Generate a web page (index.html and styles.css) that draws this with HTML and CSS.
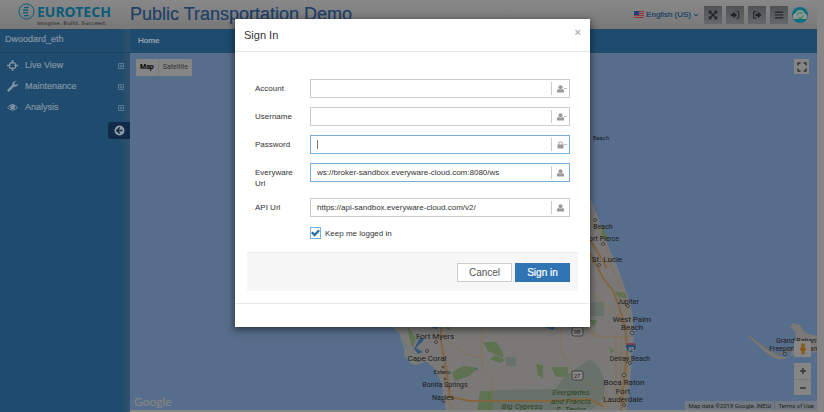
FILE: index.html
```html
<!DOCTYPE html>
<html lang="en">
<head>
<meta charset="utf-8">
<title>Public Transportation Demo</title>
<link rel="stylesheet" href="styles.css">
</head>
<body>
<svg class="defs" aria-hidden="true">
  <symbol id="user" viewBox="0 0 14 16"><circle cx="7" cy="4.500" r="4"/><path d="M0 15V11Q0 8 3 8Q7 10 11 8Q14 8 14 11V15Z"/></symbol>
  <symbol id="lock" viewBox="0 0 14 16"><path d="M1 7H13V15H1Z"/><path d="M3.500 8V5A3.500 3.500 0 0 1 10.500 5V8" fill="none" stroke="currentColor" stroke-width="2"/></symbol>
  <symbol id="plusbox" viewBox="0 0 12 12"><path d="M1 1H11V11H1ZM6 3V9M3 6H9" fill="none" stroke="currentColor" stroke-width="1.300"/></symbol>
</svg>

<div class="page">
  <header class="topbar">
    <a class="brand" href="#" aria-label="Eurotech">
      <svg class="brand-mark" viewBox="0 0 17 17"><circle cx="8.500" cy="8.500" r="7.600" fill="none" stroke="currentColor"/><path d="M6 4.500H11M5 7.200H10M5 9.900H10M6 12.600H11" stroke="currentColor" stroke-width="1.400"/></svg>
      <span class="brand-text"><b>EUROTECH</b><small>Imagine. Build. Succeed.</small></span>
    </a>
    <h1>Public Transportation Demo</h1>
    <div class="tools">
      <button class="language"><svg class="flag" viewBox="0 0 10 7"><path fill="#8c7777" d="M0 0H10V7H0Z"/><path stroke="#93373d" d="M0 .5H10M0 2.500H10M0 4.500H10M0 6.500H10"/><path fill="#1c3f86" d="M0 0H5V4H0Z"/></svg>English (US)<svg class="chevron" viewBox="0 0 6 6"><path d="M1 2L3 4L5 2" fill="none" stroke="currentColor"/></svg></button>
      <button class="tool" aria-label="Expand"><svg viewBox="0 0 12 12"><path d="M1 1H5L1 5ZM11 1V5L7 1ZM1 11V7L5 11ZM11 11H7L11 7Z"/><path d="M2 2L10 10M10 2L2 10" stroke="currentColor" stroke-width="1.800"/></svg></button>
      <button class="tool" aria-label="Log in"><svg viewBox="0 0 12 12"><path d="M1 4.500H4V2L8.500 6L4 10V7.500H1Z"/><path d="M8 2H10.500V10H8" fill="none" stroke="currentColor" stroke-width="1.200"/></svg></button>
      <button class="tool" aria-label="Log out"><svg viewBox="0 0 12 12"><path d="M4 4.500H7V2L11.500 6L7 10V7.500H4Z"/><path d="M5 2H2V10H5" fill="none" stroke="currentColor" stroke-width="1.200"/></svg></button>
      <button class="tool" aria-label="Menu"><svg viewBox="0 0 12 12"><path d="M1 2.500H11M1 6H11M1 9.500H11" stroke="currentColor" stroke-width="1.400"/></svg></button>
      <svg class="cloud" viewBox="0 0 16 16"><circle cx="8" cy="8" r="8" fill="#096f80"/><path d="M1.500 12Q-.5 7.500 3.500 6Q5 2.500 8.500 3Q12 3.300 12.500 6.200Q16.500 7.500 14.500 12Z" fill="#8e9696"/><path d="M5.300 8.300A2.900 2.900 0 0 1 10.300 6.500M11 8.300A2.900 2.900 0 0 1 6 10.400" fill="none" stroke="#38864c" stroke-width="1.200"/></svg>
    </div>
  </header>

  <div class="body">
    <nav class="sidebar">
      <div class="account">Dwoodard_eth</div>
      <ul>
        <li><a href="#"><svg class="nav-icon" viewBox="0 0 12 12"><circle cx="6" cy="6" r="3.500" fill="none" stroke="currentColor" stroke-width="1.400"/><path d="M6 0V4M6 8V12M0 6H4M8 6H12" stroke="currentColor" stroke-width="1.700"/></svg><span>Live View</span><svg class="plus"><use href="#plusbox"/></svg></a></li>
        <li><a href="#"><svg class="nav-icon" viewBox="0 0 12 12"><path d="M11.800 3L9.500 4.300L8 3.300V2L10.200.6Q7.500-.3 6.200 1.800Q5.500 3 6 4.200L.8 9.400Q0 10.400.8 11.200Q1.700 12 2.700 11.200L7.800 6.100Q10 6.800 11.300 5.200Q12 4.200 11.800 3Z"/></svg><span>Maintenance</span><svg class="plus"><use href="#plusbox"/></svg></a></li>
        <li><a href="#"><svg class="nav-icon" viewBox="0 0 12 12"><path d="M.5 6Q6-.5 11.500 6Q6 12 .5 6Z" fill="none" stroke="currentColor"/><circle cx="6" cy="5.500" r="2.700"/><path d="M4.700 5Q5 3.800 6 3.800" fill="none" stroke="#1f4b6e" stroke-width=".7"/></svg><span>Analysis</span><svg class="plus"><use href="#plusbox"/></svg></a></li>
      </ul>
      <button class="collapse" aria-label="Collapse menu"><svg viewBox="0 0 12 12"><circle cx="6" cy="6" r="5.500"/><path d="M6.300 2.800L3 6L6.300 9.200M3.200 6H9.500" fill="none" stroke="#102b49" stroke-width="1.600"/></svg></button>
    </nav>

    <main class="content">
      <div class="crumbs"><a href="#">Home</a></div>
      <section class="map" aria-label="Map">
        <svg class="map-art" viewBox="130 53 687 357" preserveAspectRatio="xMaxYMax slice">
          <path fill="#566d8b" d="M130 53H817V410H130Z"/>
          <path class="land" d="M400 53H580L590 198L596 212L604 236L612 255L618 268L625 288L631 305L634 330L632 360L630 385L627 410H446L443 399L442 386L438 375L433 367L425 361L418 365L411 364L403 354L407 347L401 336L396 327Z"/>
          <path class="park" d="M408 327L416 338L413 348L409 337ZM483 342H496L503 352V358L488 351ZM495 355L505 360L500 363L490 359ZM452 372L463 366L478 368L469 376L455 381ZM536 364L543 365L543 379L538 375ZM551 367H568V377H556ZM480 391H493V410H477ZM602 224L609 241L601 238ZM615 291L625 293L627 299L617 296ZM609 347L614 351L611 353ZM590 320H597L594 327ZM445 327H450V331Z"/>
          <path class="wetland" d="M493 390L555 389L565 376L590 359Q603 368 605 384L604 398L592 410H493ZM506 357H516V366H506ZM591 302H604V316H591Z"/>
          <path class="reef" d="M401 336L407 354L413 363L418 363M394 326L398 332"/>
          <path class="water" d="M544 322H558L553 330L544 327ZM430 326H440L437 329L432 328ZM475 367L478 370L476 370ZM420 337L424 340L416 348L423 352L418 354L414 349Z"/>
          <path class="road" d="M590 220L604 238L610 263L623 291L627 315M590 292L607 306L618 316L623 325M590 332L597 337H630M482 327V367L492 379V400M561 327V349L572 371L587 382L600 391M583 326L600 336M445 338L465 354L481 358M590 405L608 402H628M444 377L440 370L443 364M616 337V400M621 337V410M627 337L626 410M607 390V410M448 400L452 410"/>
          <path class="highway" d="M441 327V341L446 368L450 397L470 401H548L590 399L604 407M590 253L603 278L613 291L619 306L625 326L627 350L624 380L621 410M590 240L600 256L607 268"/>
          <path class="land" d="M747 335L752 338L764 347L779 356L789 358L792 351L798 352L795 331L790 328L793 323L800 325L805 333L817 336V352L794 354L784 359L776 359L765 352Z"/>
          <path class="road" d="M748 336L775 355L791 350L817 348"/>
          <g class="towns"><circle cx="595" cy="220" r="1.500"/><circle cx="603" cy="244" r="1.500"/><circle cx="599" cy="265" r="1.500"/><circle cx="628" cy="306" r="1.500"/><circle cx="632" cy="333" r="1.800"/><circle cx="630" cy="363" r="1.500"/><circle cx="624" cy="375" r="1.800"/><circle cx="624" cy="405" r="1.500"/><circle cx="436" cy="342" r="1.500"/><circle cx="427" cy="351" r="1.500"/><circle cx="443" cy="367" r="1"/><circle cx="445" cy="379" r="1"/><circle cx="444" cy="402" r="1"/><circle cx="785" cy="354" r="1.500"/></g>
          <g class="shield"><rect x="572" y="327" width="11" height="9" rx="2"/><rect x="572" y="371" width="11" height="9" rx="2"/><text x="577" y="334">98</text><text x="577" y="378">27</text></g>
          <path fill="#24486e" stroke="#8b8b8b" stroke-width=".6" d="M626 344Q631 341 636 344Q638 350 631 353Q624 350 626 344Z"/><path stroke="#8b3f42" stroke-width="1.500" d="M626 344H636"/><text class="interstate" x="631" y="351">95</text>
          <g class="small-label"><text x="601" y="140">Beach</text><text x="442" y="374">Estero</text></g>
          <g class="label"><text x="603" y="229">Beach</text><text x="604" y="241">ort Pierce</text><text x="628" y="304">Jupiter</text><text x="630" y="361">Delray Beach</text><text x="445" y="387">Bonita Springs</text><text x="443" y="400">Naples</text><text x="799" y="343">Grand Bahama</text><text x="798" y="351">Freeport Bahamas</text></g>
          <g class="city"><text x="607" y="262">St. Lucie</text><text x="632" y="322">West Palm</text><text x="632" y="330">Beach</text><text x="624" y="385">Boca Raton</text><text x="623" y="394">Fort</text><text x="623" y="402">Lauderdale</text><text x="435" y="339">Fort Myers</text><text x="427" y="361">Cape Coral</text></g>
          <g class="park-label"><text x="522" y="409">Big Cypress</text><text x="571" y="395">Everglades</text><text x="571" y="404">and Francis</text><text x="571" y="412">S. Taylor</text></g>
        </svg>
        <div class="map-type"><button class="active">Map</button><button>Satellite</button></div>
        <button class="fullscreen" aria-label="Full screen"><svg viewBox="0 0 10 10"><path d="M1 3.500V1H3.500M6.500 1H9V3.500M9 6.500V9H6.500M3.500 9H1V6.500" fill="none" stroke="currentColor" stroke-width="1.400"/></svg></button>
        <div class="map-controls">
          <button class="pegman" aria-label="Street view"><svg viewBox="0 0 8 14"><circle cx="4" cy="2.500" r="2.300"/><path d="M1 5H7L7.500 9H6L5.500 13H2.500L2 9H.5Z"/></svg></button>
          <div class="zoom"><button aria-label="Zoom in"><svg viewBox="0 0 8 8"><path d="M1 4H7M4 1V7" stroke="currentColor" stroke-width="1.500"/></svg></button><button aria-label="Zoom out"><svg viewBox="0 0 8 8"><path d="M1 4H7" stroke="currentColor" stroke-width="1.500"/></svg></button></div>
        </div>
        <span class="google">Google</span>
        <div class="legal"><span>Map data ©2018 Google, INEGI</span><a href="#">Terms of Use</a></div>
      </section>
    </main>
  </div>
</div>

<div class="overlay">
  <section class="dialog" role="dialog" aria-labelledby="dialog-title">
    <header class="dialog-head"><h2 id="dialog-title">Sign In</h2><button class="close" aria-label="Close">×</button></header>
    <form class="form">
      <div class="fields">
        <div class="row"><label for="account">Account</label><div class="field"><input id="account" type="text"><span class="addon dash"><svg><use href="#user"/></svg></span></div></div>
        <div class="row"><label for="username">Username</label><div class="field"><input id="username" type="text"><span class="addon dash"><svg><use href="#user"/></svg></span></div></div>
        <div class="row"><label for="password">Password</label><div class="field focus"><span class="caret"></span><input id="password" type="password"><span class="addon dash"><svg><use href="#lock"/></svg></span></div></div>
        <div class="row"><label for="broker">Everyware Url</label><div class="field focus"><input id="broker" type="text" value="ws://broker-sandbox.everyware-cloud.com:8080/ws"><span class="addon"><svg><use href="#user"/></svg></span></div></div>
        <div class="row"><label for="api">API Url</label><div class="field"><input id="api" type="text" value="https://api-sandbox.everyware-cloud.com/v2/"><span class="addon"><svg><use href="#user"/></svg></span></div></div>
        <div class="remember"><input id="keep" type="checkbox" checked><label for="keep">Keep me logged in</label></div>
      </div>
      <div class="actions"><button type="button">Cancel</button><button type="submit" class="primary">Sign in</button></div>
    </form>
    <footer class="dialog-foot"></footer>
  </section>
</div>
</body>
</html>
```
FILE: styles.css
```css
* { box-sizing: border-box; }
body { margin: 0; font: 8px/11px "Liberation Sans", Arial, sans-serif; color: #333; background: #858585; }
button, input { font: inherit; color: inherit; margin: 0; padding: 0; border: 0; background: none; }
a { color: inherit; text-decoration: none; }
h1, h2, ul { margin: 0; padding: 0; font-weight: normal; list-style: none; }
svg { display: block; fill: currentColor; }
.defs { position: absolute; width: 0; height: 0; }

.page { display: flex; flex-direction: column; height: 100vh; overflow: hidden; padding-right: 7px; }
.topbar { display: flex; align-items: center; flex: 0 0 29px; background: linear-gradient(#888, #787878); }
.brand { display: flex; align-items: flex-start; gap: 2px; width: 130px; padding-left: 18px; color: #095d7b; }
.brand-mark { width: 17px; height: 17px; }
.brand-text { display: flex; flex-direction: column; }
.brand-text b { font: bold 14px/17px "Noto Sans", sans-serif; }
.brand-text small { font: bold 5px/6px "DejaVu Sans", sans-serif; color: #494949; }
h1 { flex: 1; font-size: 18px; line-height: 29px; color: #1d3f68; white-space: nowrap; -webkit-text-stroke: 0.2px; }
.tools { display: flex; align-items: center; gap: 4px; padding-right: 9px; }
.language { display: flex; align-items: center; gap: 2px; margin-right: 1px; color: #183f67; -webkit-text-stroke: 0.2px; }
.flag { width: 10px; height: 7px; }
.chevron { width: 6px; height: 6px; }
.tool { display: grid; place-items: center; width: 18px; height: 18px; background: linear-gradient(#505356, #65686b); color: #222; }
.tool svg { width: 10px; height: 10px; }
.cloud { width: 16px; height: 16px; }

.body { display: flex; flex: 1; min-height: 0; }
.sidebar { flex: 0 0 130px; color: #8294a3; font-size: 9px; background: linear-gradient(90deg, #1f4b6e 120px, #31506b); }
.account { height: 24px; padding: 5px; border-bottom: 1px solid #1b4261; -webkit-text-stroke: 0.2px; }
.sidebar ul { padding-top: 2px; }
.sidebar li a { display: flex; align-items: center; gap: 7px; height: 21px; padding: 0 6px 0 7px; }
.nav-icon { width: 11px; height: 11px; }
.sidebar li span { flex: 1; -webkit-text-stroke: 0.2px; }
.plus { width: 6px; height: 6px; color: #7890a4; }
.collapse { display: grid; place-items: center; width: 22px; height: 17px; margin: 4px 0 0 auto; color: #929ba4; background: #102b49; border-radius: 3px 0 0 3px; }
.collapse svg { width: 11px; height: 11px; }

.content { display: flex; flex-direction: column; flex: 1; min-width: 0; padding-bottom: 2px; }
.crumbs { flex: 0 0 24px; padding-left: 8px; line-height: 24px; color: #a3aeb7; background: #1f4b6e; -webkit-text-stroke: 0.2px; }
.map { position: relative; flex: 1; min-height: 0; overflow: hidden; font-family: Roboto, sans-serif; background: #566d8b; }
.map-art { width: 100%; height: 100%; }
.land { fill: #7a7978; }
.park { fill: #5d7250; }
.wetland { fill: #68726a; }
.water { fill: #34597e; }
.reef { fill: none; stroke: #74816f; stroke-width: 2; }
.road { fill: none; stroke: #85704e; stroke-width: 1; }
.highway { fill: none; stroke: #85653f; stroke-width: 2; }
.towns { fill: #858585; stroke: #333; stroke-width: 0.8; }
.map-art text { text-anchor: middle; fill: #1c1c1c; }
.small-label { font-size: 6px; }
.label { font-size: 7px; }
.city { font-size: 8px; }
.map-art .park-label text { fill: #284321; font-size: 8px; font-style: italic; }
.shield { fill: #888; stroke: #333; stroke-width: 0.8; font-size: 6px; }
.shield text { stroke: none; }
.map-art .interstate { fill: #999; font-size: 5px; font-weight: bold; }
.map-type { position: absolute; top: 6px; left: 6px; display: flex; background: #858585; font-size: 7px; color: #333; border-radius: 1px; }
.map-type button { height: 17px; padding: 0 4px; }
.map-type .active { font-weight: bold; color: #050505; border-right: 1px solid #7a7a7a; }
.fullscreen { position: absolute; top: 6px; right: 8px; display: grid; place-items: center; width: 15px; height: 15px; background: #858585; }
.fullscreen svg { width: 10px; height: 10px; }
.map-controls { position: absolute; right: 6px; bottom: 15px; display: grid; gap: 6px; }
.map-controls button { display: grid; place-items: center; width: 17px; height: 16px; background: #858585; }
.pegman { color: #865817; }
.pegman svg { width: 8px; height: 12px; }
.zoom svg { width: 8px; height: 8px; }
.zoom button + button { border-top: 1px solid #777; }
.google { position: absolute; left: 4px; bottom: 1px; font: 12px/15px Lato, sans-serif; color: #858585; -webkit-text-stroke: 0.2px; }
.legal { position: absolute; right: 0; bottom: 0; display: flex; gap: 1px; font-size: 6px; line-height: 9px; color: #222; }
.legal > * { padding: 0 3px; background: #737a83; }

.overlay { position: absolute; inset: 0; display: flex; justify-content: center; align-items: flex-start; padding: 19px 0 0 1px; }
.dialog { width: 355px; background: #fff; box-shadow: 0 2px 7px 1px rgba(0, 0, 0, 0.5); }
.dialog-head { display: flex; justify-content: space-between; align-items: flex-start; height: 33px; padding: 8px 9px; border-bottom: 1px solid #e5e5e5; }
h2 { font-size: 11px; line-height: 16px; }
.close { color: #b5b5b5; font-size: 11px; line-height: 10px; font-weight: bold; }
.form { padding: 27px 12px 12px; }
.fields { padding: 0 8px; }
.row { display: flex; gap: 10px; margin-bottom: 9px; }
.row > label { flex: 0 0 45px; padding-top: 4px; }
.field { display: flex; align-items: center; flex: 1; height: 19px; padding-left: 6px; border: 1px solid #ccc; }
.field input { flex: 1; min-width: 0; height: 17px; outline: 0; }
.focus { border-color: #7aaedb; }
.caret { width: 1px; height: 9px; background: #777; }
.addon { display: flex; align-items: center; width: 18px; height: 13px; padding-left: 5px; border-left: 1px solid #ccc; color: #999; }
.addon svg { width: 7px; height: 8px; }
.dash::after { content: ""; width: 3px; height: 1px; background: #bbb; }
.remember { display: flex; align-items: center; gap: 4px; padding: 1px 0 13px 55px; }
.remember input { appearance: none; width: 11px; height: 12px; border: 1px solid #7aaedb; display: grid; place-items: center; }
.remember input::before { content: ""; width: 9px; height: 9px; background: #2a71ae; clip-path: polygon(0 50%, 18% 32%, 40% 54%, 82% 10%, 100% 28%, 40% 92%); }
.actions { display: flex; justify-content: flex-end; gap: 3px; padding: 10px 8px 9px; background: #f7f7f7; border-top: 1px solid #eaeaea; }
.actions button { width: 55px; height: 19px; font-size: 10px; color: #555; border: 1px solid #ccc; background: #fff; }
.actions .primary { color: #fff; background: #2f75b3; border-color: #2f75b3; -webkit-text-stroke: 0.2px; }
.dialog-foot { height: 24px; border-top: 1px solid #eaeaea; }
```
